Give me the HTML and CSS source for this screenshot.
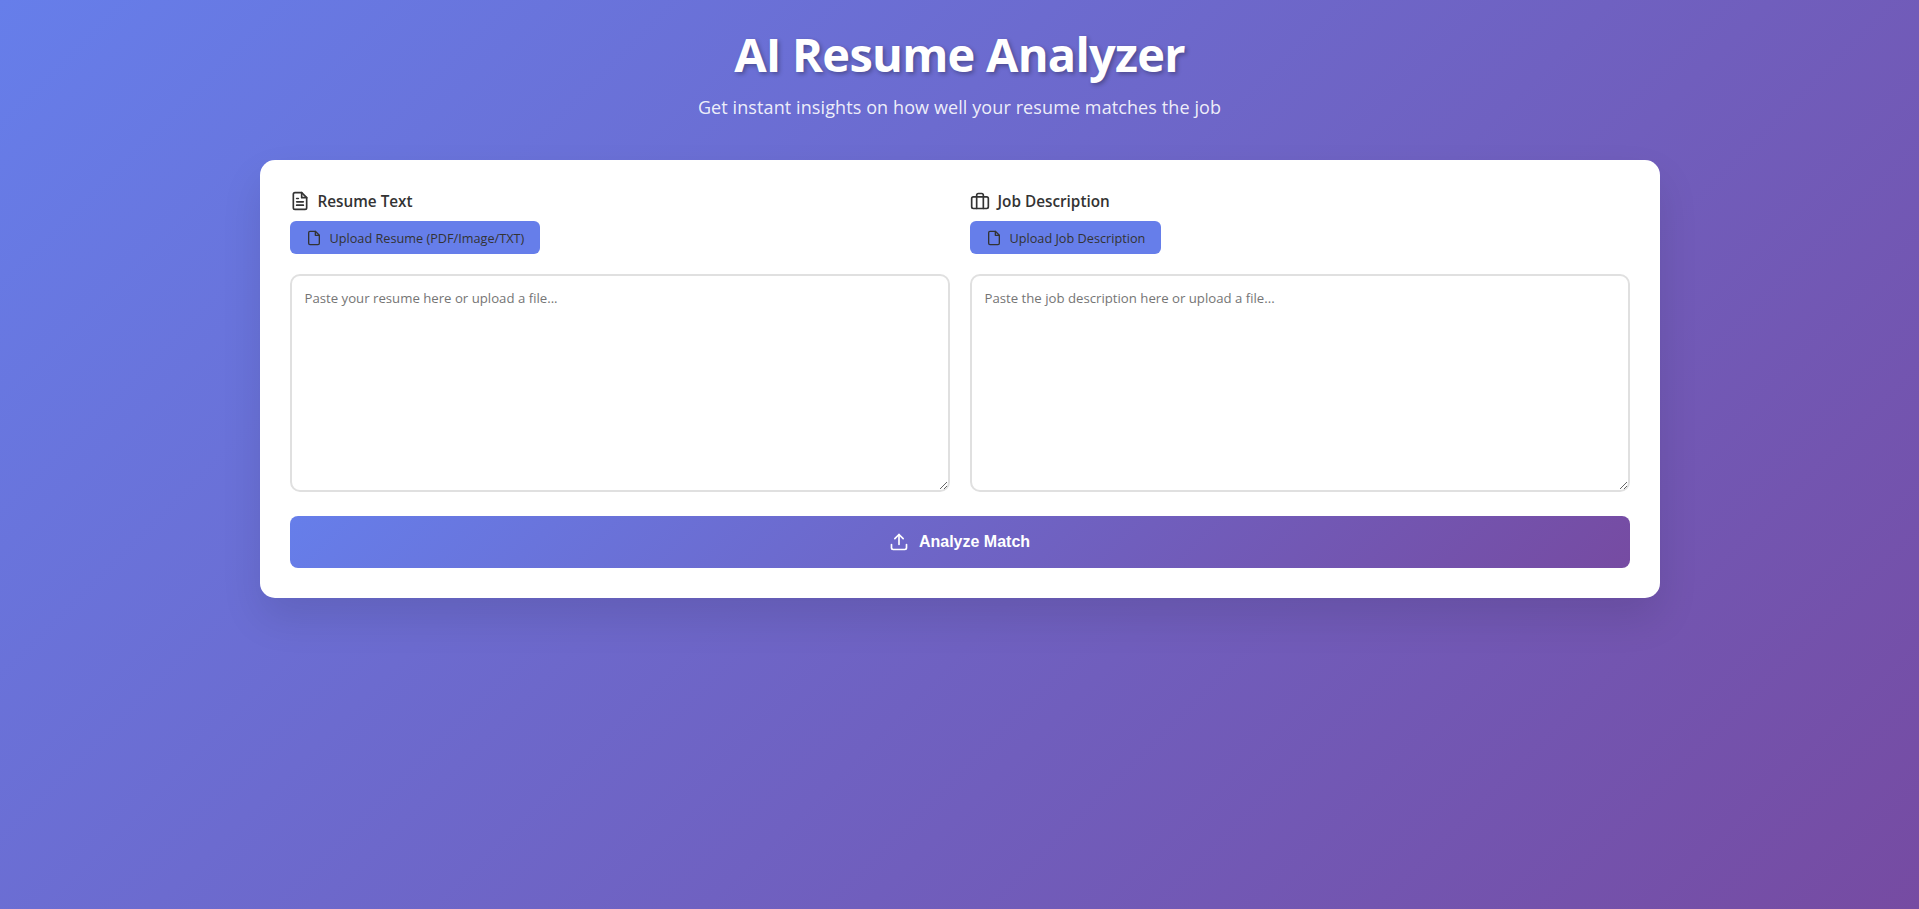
FILE: index.html
```html
<!DOCTYPE html>
<html lang="en">
<head>
<meta charset="utf-8">
<title>AI Resume Analyzer</title>
<link rel="stylesheet" href="styles.css">
</head>
<body>
<div class="page">
  <header class="hero">
    <h1 class="title">AI Resume Analyzer</h1>
    <p class="subtitle">Get instant insights on how well your resume matches the job</p>
  </header>
  <main class="card">
    <div class="columns">
      <section class="field">
        <label class="label">
          <svg class="label-icon" viewBox="0 0 24 24" fill="none" stroke="currentColor" stroke-width="2" stroke-linecap="round" stroke-linejoin="round"><path d="M14 2H6a2 2 0 0 0-2 2v16a2 2 0 0 0 2 2h12a2 2 0 0 0 2-2V8z"/><path d="M14 2v6h6"/><path d="M16 13H8"/><path d="M16 17H8"/><path d="M10 9H8"/></svg>
          <span>Resume Text</span>
        </label>
        <button class="upload" type="button">
          <svg class="upload-icon" viewBox="0 0 24 24" fill="none" stroke="currentColor" stroke-width="2" stroke-linecap="round" stroke-linejoin="round"><path d="M14 2H6a2 2 0 0 0-2 2v16a2 2 0 0 0 2 2h12a2 2 0 0 0 2-2V8z"/><path d="M14 2v6h6"/></svg>
          <span>Upload Resume (PDF/Image/TXT)</span>
        </button>
        <textarea class="input" placeholder="Paste your resume here or upload a file..."></textarea>
      </section>
      <section class="field">
        <label class="label">
          <svg class="label-icon" viewBox="0 0 24 24" fill="none" stroke="currentColor" stroke-width="2" stroke-linecap="round" stroke-linejoin="round"><rect x="2" y="7" width="20" height="14" rx="2"/><path d="M16 21V5a2 2 0 0 0-2-2h-4a2 2 0 0 0-2 2v16"/></svg>
          <span>Job Description</span>
        </label>
        <button class="upload" type="button">
          <svg class="upload-icon" viewBox="0 0 24 24" fill="none" stroke="currentColor" stroke-width="2" stroke-linecap="round" stroke-linejoin="round"><path d="M14 2H6a2 2 0 0 0-2 2v16a2 2 0 0 0 2 2h12a2 2 0 0 0 2-2V8z"/><path d="M14 2v6h6"/></svg>
          <span>Upload Job Description</span>
        </button>
        <textarea class="input" placeholder="Paste the job description here or upload a file..."></textarea>
      </section>
    </div>
    <button class="analyze" type="button">
      <svg class="analyze-icon" viewBox="0 0 24 24" fill="none" stroke="currentColor" stroke-width="2" stroke-linecap="round" stroke-linejoin="round"><path d="M21 15v4a2 2 0 0 1-2 2H5a2 2 0 0 1-2-2v-4"/><path d="M17 8l-5-5-5 5"/><path d="M12 3v12"/></svg>
      <span>Analyze Match</span>
    </button>
  </main>
</div>
</body>
</html>
```
FILE: styles.css
```css
* { box-sizing: border-box; }
html, body { height: 100%; }
body {
  margin: 0;
  font-family: "Open Sans", "Noto Sans", sans-serif;
  background: linear-gradient(135deg, #667eea 0%, #764ba2 100%);
  color: #333;
}
.page {
  width: 1400px;
  margin: 0 auto;
  padding-top: 22px;
}
.hero {
  text-align: center;
  color: #fff;
  margin-bottom: 40px;
}
.title {
  margin: 0 0 8px;
  font-size: 47px;
  line-height: 65px;
  font-weight: 700;
  letter-spacing: -0.75px;
  text-shadow: 2px 2px 4px rgba(0, 0, 0, 0.3);
}
.subtitle {
  margin: 0;
  font-size: 18px;
  line-height: 25px;
  letter-spacing: 0.1px;
  color: rgba(255, 255, 255, 0.9);
}
.card {
  background: #fff;
  border-radius: 15px;
  padding: 30px;
  box-shadow: 0 20px 40px rgba(0, 0, 0, 0.1);
}
.columns {
  display: grid;
  grid-template-columns: 1fr 1fr;
  gap: 20px;
  margin-bottom: 24px;
}
.field {
  display: flex;
  flex-direction: column;
  align-items: flex-start;
}
.label {
  display: flex;
  align-items: center;
  gap: 8px;
  font-size: 15.3px;
  line-height: 22px;
  font-weight: 600;
  color: #333;
  margin-bottom: 9px;
}
.label-icon { width: 20px; height: 20px; }
.upload {
  display: inline-flex;
  align-items: center;
  gap: 8px;
  height: 33px;
  padding: 1px 16px 0;
  border: none;
  border-radius: 6px;
  background: #667eea;
  color: #333;
  font-family: inherit;
  font-size: 12.7px;
  font-weight: 500;
  margin-bottom: 20px;
}
.upload-icon { width: 16px; height: 16px; }
.input {
  display: block;
  width: 100%;
  height: 218px;
  padding: 12px 13px;
  border: 2px solid #e0e0e0;
  border-radius: 10px;
  font-family: inherit;
  font-size: 13.2px;
  line-height: 20px;
  resize: vertical;
}
.input::placeholder { color: #757575; opacity: 1; }
.analyze {
  display: flex;
  align-items: center;
  justify-content: center;
  gap: 10px;
  width: 100%;
  height: 52px;
  border: none;
  border-radius: 8px;
  background: linear-gradient(135deg, #667eea 0%, #764ba2 100%);
  color: #fff;
  font-family: "Liberation Sans", Arial, sans-serif;
  font-size: 16px;
  font-weight: 700;
}
.analyze-icon { width: 20px; height: 20px; }
```
